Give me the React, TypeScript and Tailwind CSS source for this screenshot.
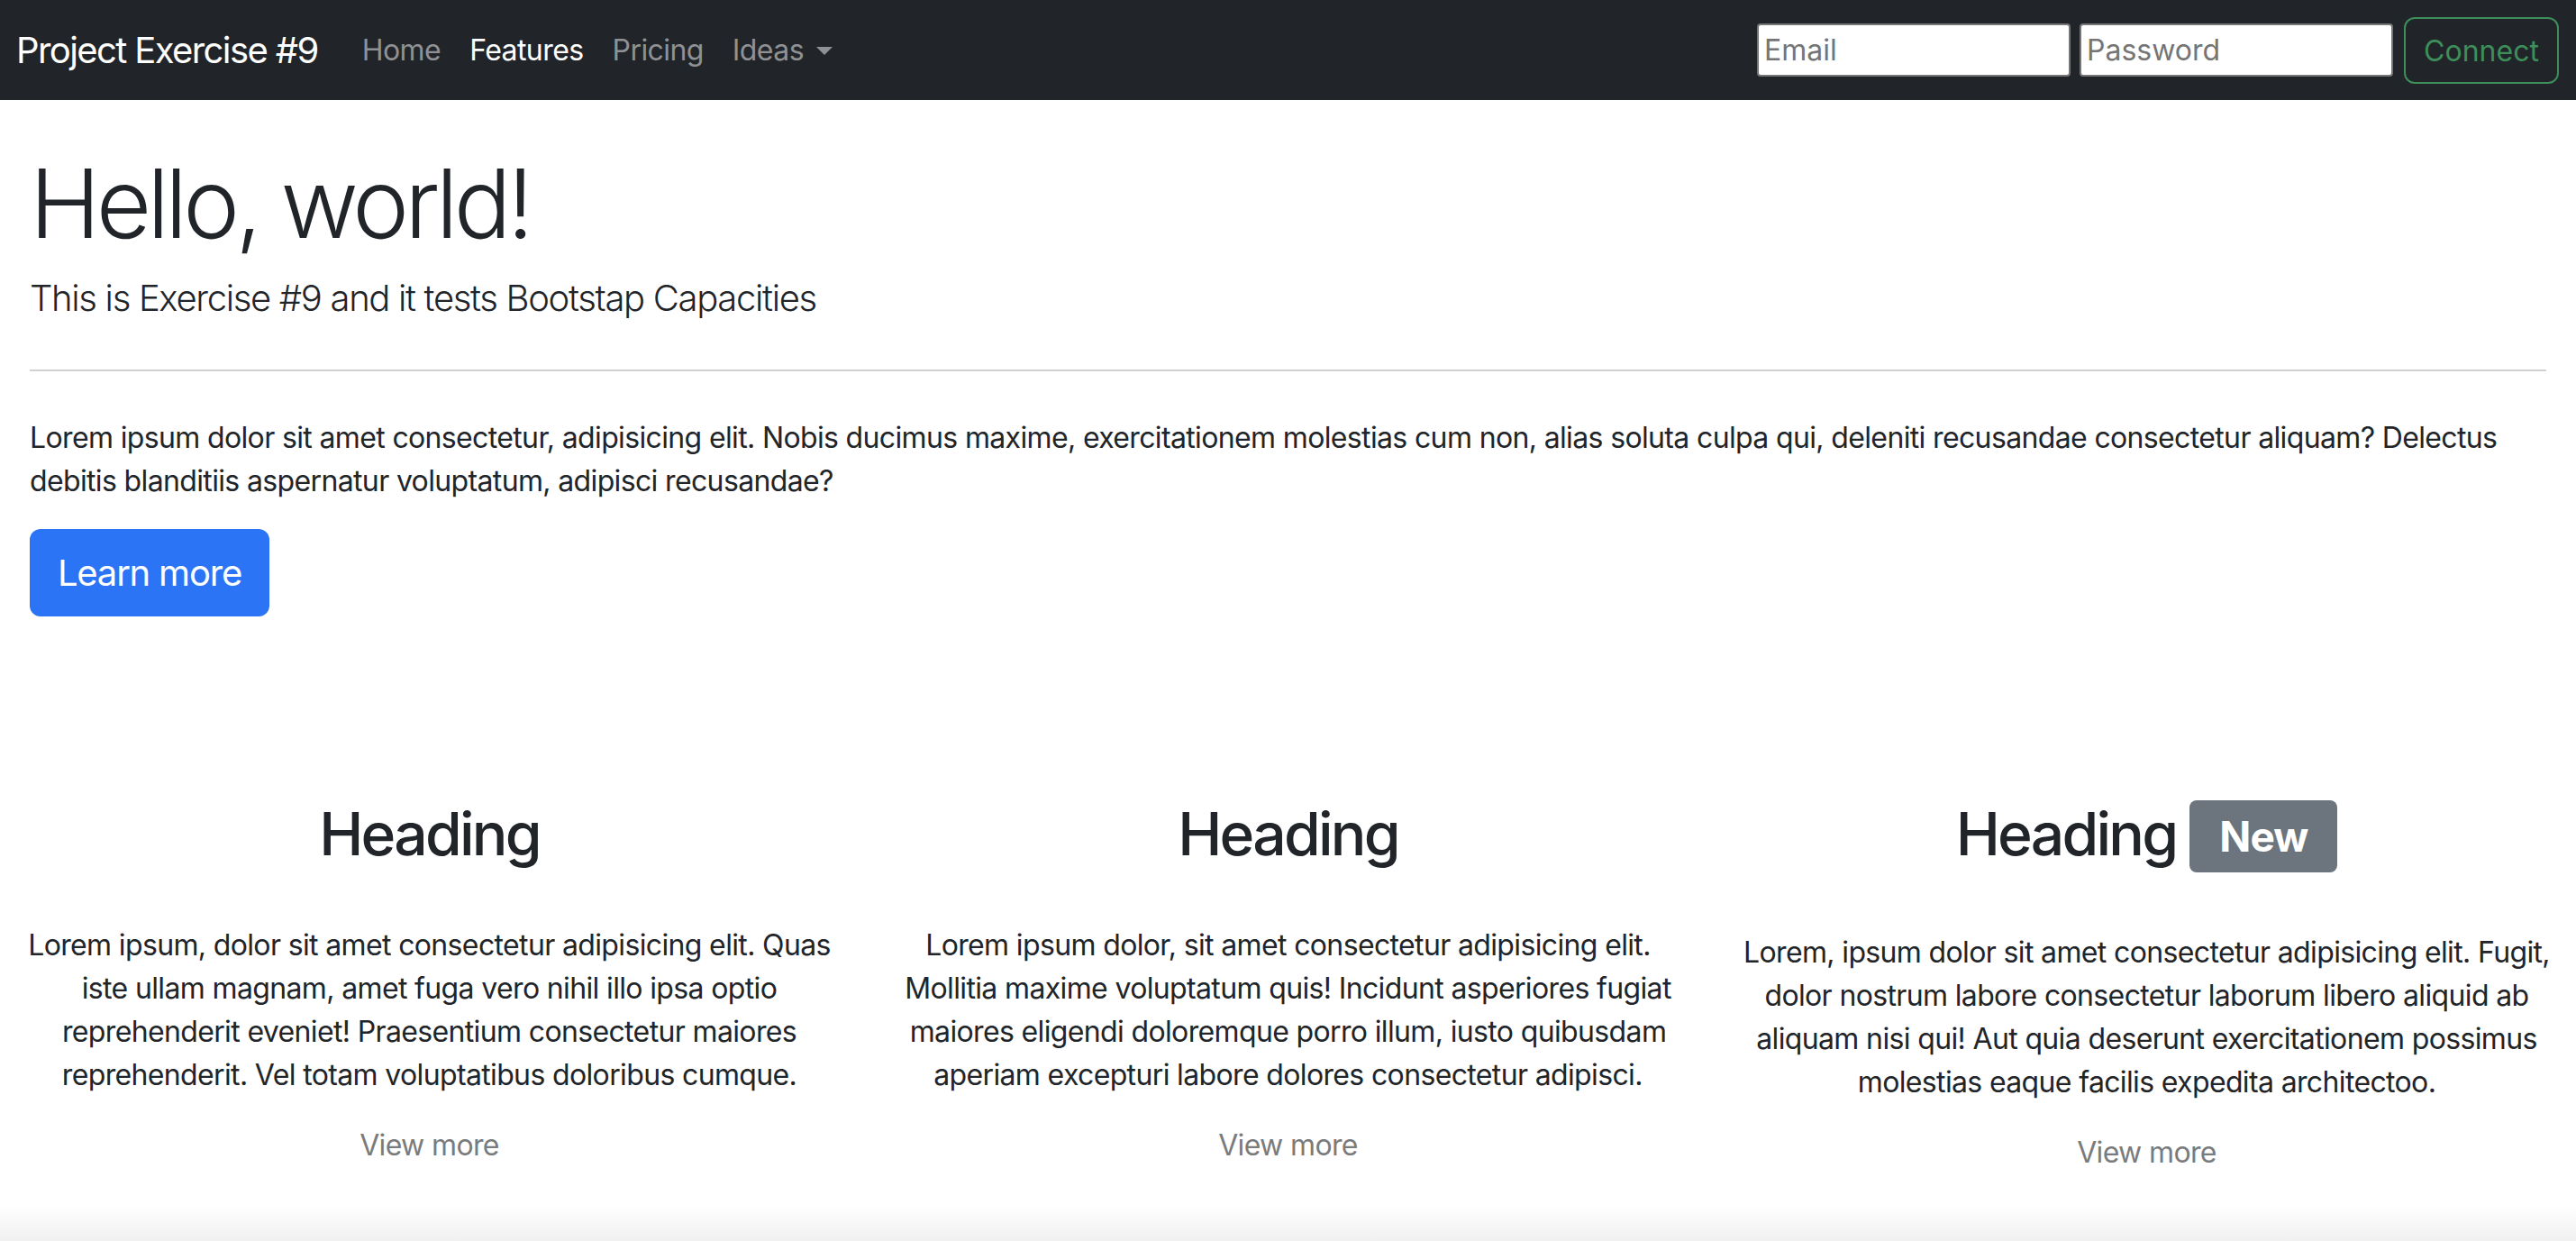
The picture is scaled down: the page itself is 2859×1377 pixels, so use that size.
import React from 'react';

const columns = [
  {
    badge: false,
    lines: [
      'Lorem ipsum, dolor sit amet consectetur adipisicing elit. Quas',
      'iste ullam magnam, amet fuga vero nihil illo ipsa optio',
      'reprehenderit eveniet! Praesentium consectetur maiores',
      'reprehenderit. Vel totam voluptatibus doloribus cumque.',
    ],
  },
  {
    badge: false,
    lines: [
      'Lorem ipsum dolor, sit amet consectetur adipisicing elit.',
      'Mollitia maxime voluptatum quis! Incidunt asperiores fugiat',
      'maiores eligendi doloremque porro illum, iusto quibusdam',
      'aperiam excepturi labore dolores consectetur adipisci.',
    ],
  },
  {
    badge: true,
    lines: [
      'Lorem, ipsum dolor sit amet consectetur adipisicing elit. Fugit,',
      'dolor nostrum labore consectetur laborum libero aliquid ab',
      'aliquam nisi qui! Aut quia deserunt exercitationem possimus',
      'molestias eaque facilis expedita architectoo.',
    ],
  },
];

const App: React.FC = () => {
  return (
    <div className="flex h-[1377px] flex-col overflow-hidden bg-white text-[#212529] font-['Inter',sans-serif]">
      {/* navbar */}
      <nav className="flex h-[111px] shrink-0 items-center bg-[#212529] pl-[18px] pr-[19px]">
        <a className="text-[40px] leading-none tracking-[-0.04em] text-white">Project Exercise #9</a>
        <ul className="ml-[33px] flex items-center text-[32px] tracking-[-0.018em]">
          <li className="px-[16px] text-[#8f9194]">Home</li>
          <li className="px-[16px] text-white">Features</li>
          <li className="px-[16px] text-[#8f9194]">Pricing</li>
          <li className="flex items-center px-[16px] text-[#8f9194]">
            Ideas
            <span className="ml-[14px] mt-[2px] h-0 w-0 border-x-[9px] border-t-[9px] border-x-transparent border-t-[#8f9194]" />
          </li>
        </ul>
        <form className="ml-auto flex items-center">
          <input
            type="text"
            placeholder="Email"
            className="h-[59px] w-[348px] rounded-[4px] border-2 border-[#767676] bg-white pl-[6px] text-[32px] text-black placeholder:text-[#757575]"
          />
          <input
            type="password"
            placeholder="Password"
            className="ml-[10px] h-[59px] w-[348px] rounded-[4px] border-2 border-[#767676] bg-white pl-[6px] text-[32px] text-black placeholder:text-[#757575]"
          />
          <button
            type="button"
            className="ml-[12px] h-[74px] w-[172px] rounded-[12px] border-2 border-[#3e8e5a] pt-[3px] text-[32px] text-[#3e8e5a]"
          >
            Connect
          </button>
        </form>
      </nav>

      {/* hero */}
      <section className="shrink-0 px-[33px] pt-[51px]">
        <h1 className="text-[106px] font-light leading-[1.2] tracking-[-0.045em]">Hello, world!</h1>
        <p className="mt-[12px] text-[40px] font-light leading-[1.5] tracking-[-0.033em]">
          This is Exercise #9 and it tests Bootstap Capacities
        </p>
        <hr className="mt-[49px] border-t-2 border-[#d0d1d2]" />
        <p className="mt-[50px] text-[32px] leading-[1.5] tracking-[-0.02em]">
          <span className="block whitespace-nowrap">
            Lorem ipsum dolor sit amet consectetur, adipisicing elit. Nobis ducimus maxime, exercitationem molestias cum
            non, alias soluta culpa qui, deleniti recusandae consectetur aliquam? Delectus
          </span>
          <span className="block whitespace-nowrap">debitis blanditiis aspernatur voluptatum, adipisci recusandae?</span>
        </p>
        <button
          type="button"
          className="mt-[29px] h-[97px] w-[266px] rounded-[12px] bg-[#2b74f6] text-[40px] tracking-[-0.03em] text-white"
        >
          Learn more
        </button>
      </section>

      {/* columns */}
      <section className="mt-[202px] grid shrink-0 grid-cols-3">
        {columns.map((col, i) => (
          <div key={i} className="px-[24px] text-center">
            <div className="flex items-start justify-center">
              <h2 className="text-[66px] font-medium leading-[1.2] tracking-[-0.042em]">Heading</h2>
              {col.badge && (
                <span className="ml-[15px] mt-[2px] flex h-[80px] w-[164px] items-center justify-center rounded-[8px] bg-[#6c757d] text-[46px] font-bold tracking-[-0.02em] text-white">
                  New
                </span>
              )}
            </div>
            <p
              className={
                col.badge
                  ? 'mt-[65px] text-[32px] leading-[1.5] tracking-[-0.02em]'
                  : 'mt-[60px] text-[32px] leading-[1.5] tracking-[-0.02em]'
              }
            >
              {col.lines.map((l, j) => (
                <span key={j} className="block whitespace-nowrap">
                  {l}
                </span>
              ))}
            </p>
            <p className="mt-[30px] text-[32px] leading-[1.5] tracking-[-0.02em] text-[#7a7b7c]">View more</p>
          </div>
        ))}
      </section>

      <div className="flex-1" />
      <div className="h-[40px] shrink-0 bg-gradient-to-b from-white to-[#f0f0f0]" />
    </div>
  );
};

export default App;
